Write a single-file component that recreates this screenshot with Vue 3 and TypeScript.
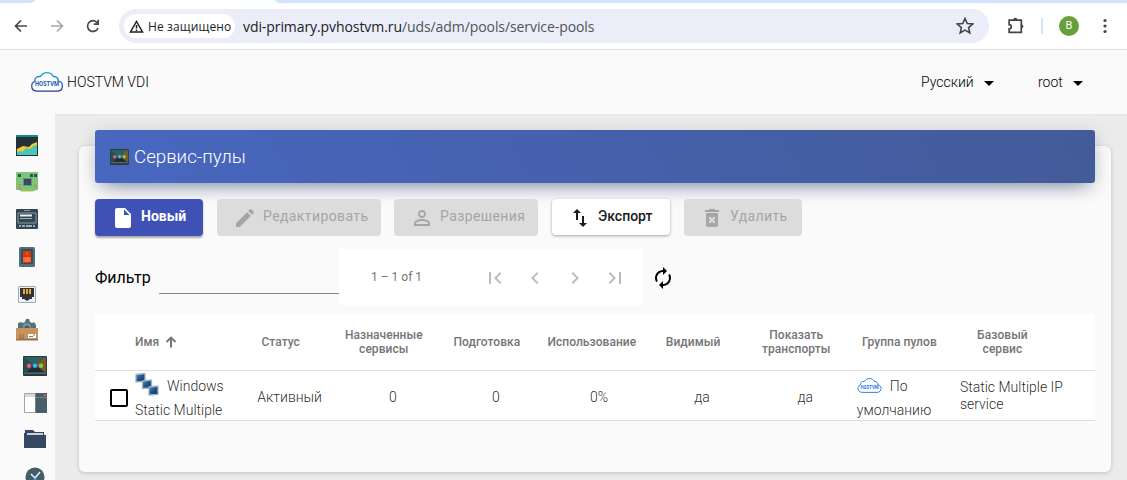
<script setup lang="ts">
interface ToolButton {
  key: string
  label: string
  kind: 'primary' | 'disabled' | 'plain'
  icon: string
}

interface Column {
  key: string
  lines: string[]
  sorted?: boolean
}

const buttons: ToolButton[] = [
  { key: 'new', label: 'Новый', kind: 'primary', icon: 'M6 2c-1.1 0-2 .9-2 2v16c0 1.1.9 2 2 2h12c1.1 0 2-.9 2-2V8l-6-6H6zm7 7V3.5L18.5 9H13z' },
  { key: 'edit', label: 'Редактировать', kind: 'disabled', icon: 'M3 17.25V21h3.75L17.81 9.94l-3.75-3.75L3 17.25zM20.71 7.04a1 1 0 0 0 0-1.41l-2.34-2.34a1 1 0 0 0-1.41 0l-1.83 1.83 3.75 3.75 1.83-1.83z' },
  { key: 'perm', label: 'Разрешения', kind: 'disabled', icon: 'M12 5.9a2.1 2.1 0 1 1 0 4.2 2.1 2.1 0 0 1 0-4.2m0 9c2.97 0 6.1 1.46 6.1 2.1v1.1H5.9V17c0-.64 3.13-2.1 6.1-2.1M12 4C9.790 4 8 5.790 8 8s1.790 4 4 4 4-1.790 4-4-1.790-4-4-4zm0 9c-2.670 0-8 1.340-8 4v3h16v-3c0-2.660-5.330-4-8-4z' },
  { key: 'export', label: 'Экспорт', kind: 'plain', icon: 'M16 17.010V10h-2v7.010h-3L15 21l4-3.990h-3zM9 3L5 6.990h3V14h2V6.990h3L9 3z' },
  { key: 'delete', label: 'Удалить', kind: 'disabled', icon: 'M6 19c0 1.100.900 2 2 2h8c1.100 0 2-.900 2-2V7H6v12zm2.460-7.120l1.410-1.410L12 12.590l2.120-2.120 1.410 1.410L13.410 14l2.120 2.120-1.410 1.410L12 15.410l-2.120 2.120-1.410-1.410L10.590 14l-2.130-2.120zM15.500 4l-1-1h-5l-1 1H5v2h14V4z' },
]

const pagerIcons: string[] = [
  'M18.410 16.590L13.820 12l4.590-4.590L17 6l-6 6 6 6zM6 6h2v12H6z',
  'M15.410 7.410L14 6l-6 6 6 6 1.410-1.410L10.830 12z',
  'M10 6L8.590 7.410 13.170 12l-4.580 4.590L10 18l6-6z',
  'M5.590 7.410L10.180 12l-4.590 4.590L7 18l6-6-6-6zM16 6h2v12h-2z',
]

const columns: Column[] = [
  { key: 'name', lines: ['Имя'], sorted: true },
  { key: 'state', lines: ['Статус'] },
  { key: 'assigned', lines: ['Назначенные', 'сервисы'] },
  { key: 'preparing', lines: ['Подготовка'] },
  { key: 'usage', lines: ['Использование'] },
  { key: 'visible', lines: ['Видимый'] },
  { key: 'transports', lines: ['Показать', 'транспорты'] },
  { key: 'group', lines: ['Группа пулов'] },
  { key: 'parent', lines: ['Базовый', 'сервис'] },
]

const plainCells: string[] = ['Активный', '0', '0', '0%', 'да', 'да']
const url = { host: 'vdi-primary.pvhostvm.ru', path: '/uds/adm/pools/service-pools' }
</script>

<template>
  <div class="page">
    <svg class="defs" width="0" height="0" aria-hidden="true">
      <defs>
        <linearGradient id="cloudStroke" x1="0" y1="0" x2="0" y2="1">
          <stop offset="0" stop-color="#20a8e0" />
          <stop offset="1" stop-color="#263c92" />
        </linearGradient>
        <linearGradient id="screen" x1="0" y1="0" x2="1" y2="1">
          <stop offset="0" stop-color="#4d94cc" />
          <stop offset="0.5" stop-color="#1e5488" />
          <stop offset="1" stop-color="#123b66" />
        </linearGradient>
        <symbol id="pool" viewBox="0 0 24 20">
          <rect width="24" height="20" rx="1" fill="#263940" />
          <path d="M1 1h22v15H1z" fill="#2b6260" />
          <path d="M1 1v15l10-6z" fill="#23504f" />
          <path d="M23 1v15l-11-7z" fill="#80591d" />
          <path d="M3 16l9-7 9 7z" fill="#252b2d" />
          <path d="M1 16.500h22v1.500H1z" fill="#59666b" />
          <circle cx="6" cy="9.700" r="2.200" fill="#f75186" />
          <circle cx="12" cy="9.700" r="2.200" fill="#35baf5" />
          <circle cx="18" cy="9.700" r="2.200" fill="#7bc86c" />
        </symbol>
        <symbol id="cloud" viewBox="0 0 32 20">
          <path d="M7 19.200C3 19.200.7 17 .7 14c0-2.500 1.200-4 3-4.600C3.500 6.200 6 4 9.300 4.600 11 1.800 13.200.7 16 .7c3 0 5 1.300 6.200 3.800 3.200-.2 5.400 1.700 5.100 4.700 2.700.5 4.100 2.200 4.100 4.800 0 3.100-2.200 5.200-5.400 5.200z" fill="#fff" />
        </symbol>
      </defs>
    </svg>

    <header class="browser">
      <div class="tabs"><i class="tab-left"></i><i class="tab-active"></i><i class="tab-rest"></i></div>
      <div class="toolbar">
        <svg class="nav back" viewBox="0 0 16 16"><path d="M14 8H3M8 2.500L2.500 8 8 13.500" /></svg>
        <svg class="nav forward" viewBox="0 0 16 16"><path d="M2 8h11M8 2.500L13.500 8 8 13.500" /></svg>
        <svg class="nav reload" viewBox="0 0 16 16"><path d="M13 10a5.400 5.400 0 1 1-.8-5.300M13.200 1.800v4.400H8.800" /></svg>
        <div class="address">
          <div class="insecure">
            <svg width="15" height="13" viewBox="0 0 15 13"><path d="M7.500 1.500L13.500 12h-12z" fill="none" stroke="#202124" stroke-width="1.500" /><path d="M7.500 5v3.500M7.500 9.500v1.500" stroke="#202124" stroke-width="1.500" /></svg>
            <span>Не защищено</span>
          </div>
          <div class="url">{{ url.host }}<span>{{ url.path }}</span></div>
          <svg class="star" viewBox="0 0 16 16"><path d="M8 1.300l2 4.500 4.900.4-3.700 3.200 1.100 4.800L8 11.700l-4.300 2.500 1.100-4.800L1.100 6.200 6 5.800z" /></svg>
        </div>
        <svg class="puzzle" viewBox="0 0 17 17"><path d="M2 3h11.500v11.500H2v-3.300c1.300 0 2-.8 2-2s-.7-2-2-2z" /><path d="M5.800 2.800a2 2 0 0 1 4 0zM13.500 6.800a2 2 0 0 1 0 4z" class="solid" /></svg>
        <i class="divider"></i>
        <span class="avatar">B</span>
        <svg class="dots" viewBox="0 0 4 16"><circle cx="2" cy="2.500" r="1.600" /><circle cx="2" cy="8" r="1.600" /><circle cx="2" cy="13.500" r="1.600" /></svg>
      </div>
    </header>

    <nav class="topbar">
      <svg class="brand-logo" viewBox="0 0 32 20">
        <path d="M7 19.200C3 19.200.7 17 .7 14c0-2.500 1.200-4 3-4.600C3.500 6.200 6 4 9.300 4.600 11 1.800 13.200.7 16 .7c3 0 5 1.300 6.200 3.800 3.200-.2 5.400 1.700 5.100 4.700 2.700.5 4.100 2.200 4.100 4.800 0 3.100-2.200 5.200-5.400 5.200z" fill="#fff" stroke="url(#cloudStroke)" stroke-width="1.300" />
        <text x="16" y="14" text-anchor="middle" textLength="24" lengthAdjust="spacingAndGlyphs" class="logo-text">HOSTVM</text>
      </svg>
      <span class="brand">HOSTVM VDI</span>
      <span class="menu lang">Русский<i></i></span>
      <span class="menu user">root<i></i></span>
    </nav>

    <div class="body">
      <aside class="sidebar">
        <div><svg width="22" height="21" viewBox="0 0 22 21"><path d="M0 0h22v21H0z" fill="#26323a" /><path d="M0 0h22v2H0z" fill="#168b82" /><path d="M1 19v-5l6-3 6 1 3-3 5-2v5z" fill="#f5cb32" /><path d="M1 20v-3l3-1 2 1 4-4 4 1 3-3 4-1v10z" fill="#49c7b9" /></svg></div>
        <div><svg width="22" height="20" viewBox="0 0 22 20"><path d="M0 0h22v18h-3v1H4v-1H0z" fill="#7dc578" /><path d="M5 19h12v1H5z" fill="#f5d66a" /><path d="M7 6h9v8H7z" fill="#718d82" /><path d="M8 7h7v6H8zM2 2h3v3H2zM14 2h3v3h-3zM18 2h3v3h-3z" fill="#354b5e" /><path d="M2 12.500h3M2 15h3M2 17h3M18 13h3M18 15h3" stroke="#d8766a" /></svg></div>
        <div><svg width="22" height="20" viewBox="0 0 22 20"><rect width="22" height="20" rx="1" fill="#304650" /><path d="M8 1.500h6" stroke="#89979d" /><path d="M2 4h18v10H2z" fill="none" stroke="#8c9da5" /><path d="M4 6.500h12" stroke="#eceff1" stroke-width="2" /><path d="M4 9.500h12" stroke="#9badb5" /><path d="M3 17h2m1 0h3m1 0h6m1 0h2" stroke="#c0cbd0" stroke-width="1.500" /></svg></div>
        <div><svg width="16" height="20" viewBox="0 0 16 20"><rect width="16" height="20" rx="1.500" fill="#52707c" /><path d="M2 2h12v15H2z" fill="#354e59" /><path d="M4 4h8v12H4z" fill="#dc3508" /><path d="M4 10h8v5H4z" fill="#ff5d2b" /><path d="M8 5v3" stroke="#ff6d38" /><circle cx="8" cy="12.500" r="1.500" fill="none" stroke="#ff9169" /></svg></div>
        <div><svg width="18" height="18" viewBox="0 0 18 18"><rect x=".5" y=".5" width="17" height="16" rx=".5" fill="#eef2f4" stroke="#9bacb4" /><path d="M2 2h14v9h-2v2h-2l-3 2-3-2H4v-2H2z" fill="#323335" /><path d="M6 3v5M9 3v5M12 3v5" stroke="#efa33c" stroke-width="2" /></svg></div>
        <div><svg width="22" height="22" viewBox="0 0 22 22"><path d="M2 11V4l3-1 2 1 2-1 1-3h3l1 3 2 1 2-1 2 3v5z" fill="#52727d" /><circle cx="11" cy="8" r="4" fill="#7b919a" /><circle cx="11" cy="9" r="2.500" fill="#455e68" /><path d="M0 9h22v12H0z" fill="#c8925c" /><path d="M0 20h22v1.500H0z" fill="#97714e" /><path d="M12 15h8v4h-8z" fill="#fff" /><path d="M13 17.500h4M17 16h2" stroke="#6c7b80" /><path d="M4 15v4M7 15v4M3 19h5" stroke="#946b43" /></svg></div>
        <div class="nested"><svg width="24" height="20"><use href="#pool" /></svg></div>
        <div class="nested"><svg width="23" height="21" viewBox="0 0 23 21"><path d="M.5.5h11v19H.500z" fill="#fff" stroke="#9ba8ad" /><path d="M1 1h10v3H1z" fill="#d5d9db" /><path d="M11.500 0H23v20H11.500z" fill="#485f69" /><path d="M12 4.500h11" stroke="#71858e" /><circle cx="21" cy="2.300" r="1.200" fill="#ef5350" /></svg></div>
        <div class="nested"><svg width="22" height="18" viewBox="0 0 22 18"><path d="M1 3V0h8l2 2h9v3h2v13H0V3z" fill="#344961" /><path d="M3 4h16" stroke="#fff" stroke-width="1.500" /></svg></div>
        <div class="nested"><svg width="20" height="20" viewBox="0 0 20 20"><circle cx="10" cy="10" r="9.500" fill="#435c67" /><path d="M6 7l4 4 5-6" fill="none" stroke="#e5eaec" stroke-width="1.600" /><circle cx="10" cy="12.500" r="1.500" fill="#4b92e8" /></svg></div>
      </aside>

      <main class="content">
        <section class="card">
          <h1 class="heading"><svg width="19" height="16"><use href="#pool" /></svg>Сервис-пулы</h1>

          <div class="actions">
            <button v-for="b in buttons" :key="b.key" :class="['btn', b.kind, b.key]">
              <svg viewBox="0 0 24 24"><path :d="b.icon" fill-rule="evenodd" /></svg>{{ b.label }}
            </button>
          </div>

          <div class="navigation">
            <label class="filter">Фильтр<i></i></label>
            <div class="paginator">
              <span>1 – 1 of 1</span>
              <svg v-for="(d, n) in pagerIcons" :key="n" viewBox="0 0 24 24"><path :d="d" /></svg>
            </div>
            <svg class="refresh" viewBox="0 0 24 24"><path d="M12 6v3l4-4-4-4v3c-4.420 0-8 3.580-8 8 0 1.570.460 3.030 1.240 4.260L6.700 14.800A5.900 5.900 0 0 1 6 12c0-3.310 2.690-6 6-6zm6.760 1.740L17.300 9.200c.440.840.700 1.790.700 2.800 0 3.310-2.690 6-6 6v-3l-4 4 4 4v-3c4.420 0 8-3.580 8-8 0-1.570-.460-3.030-1.240-4.260z" /></svg>
          </div>

          <div class="table">
            <div class="row head">
              <div class="check"></div>
              <div v-for="c in columns" :key="c.key" :class="['cell', { sorted: c.sorted }]">
                <div><div v-for="line in c.lines" :key="line">{{ line }}</div></div>
                <span class="arrow"><svg v-if="c.sorted" width="12" height="12" viewBox="0 0 12 12"><path d="M6 11.500V2M1.500 6L6 1.600 10.500 6" /></svg></span>
              </div>
            </div>
            <div class="row data">
              <div class="check"><i></i></div>
              <div class="cell name">
                <div class="line">
                  <svg width="24" height="24" viewBox="0 0 24 24">
                    <g stroke="#a3b4bf" stroke-width="1.300" fill="url(#screen)">
                      <path d="M1 1.500l9-1v8l-9 .5z" /><path d="M7.500 8l9-1v8l-9 .5z" /><path d="M14 14l9-1v8.500l-9 .5z" />
                    </g>
                  </svg><span>Windows</span>
                </div>
                <div class="line">Static Multiple</div>
              </div>
              <div v-for="(v, n) in plainCells" :key="n" class="cell center">{{ v }}</div>
              <div class="cell name group">
                <div class="line">
                  <svg width="25" height="15" viewBox="0 0 32 20">
                    <path d="M7 19.200C3 19.200.7 17 .7 14c0-2.500 1.200-4 3-4.600C3.500 6.200 6 4 9.300 4.600 11 1.800 13.200.7 16 .7c3 0 5 1.300 6.200 3.800 3.200-.2 5.400 1.700 5.100 4.700 2.700.5 4.100 2.200 4.100 4.800 0 3.100-2.200 5.200-5.400 5.200z" fill="#fff" stroke="#287fe4" stroke-width="1.300" />
                    <text x="16" y="14" text-anchor="middle" textLength="24" lengthAdjust="spacingAndGlyphs" class="logo-text bright">HOSTVM</text>
                  </svg><span>По</span>
                </div>
                <div class="line">умолчанию</div>
              </div>
              <div class="cell parent">Static Multiple IP<br />service</div>
            </div>
          </div>
        </section>
      </main>
    </div>
  </div>
</template>

<style>
html, body { overflow: hidden; }
</style>

<style scoped>
* { box-sizing: border-box; }
.page { width: 1127px; height: 480px; overflow: hidden; background: #fafafa; font-family: Roboto, "Noto Sans", sans-serif; color: #000; display: flex; flex-direction: column; }
.defs { display: block; flex: none; height: 0; }
svg { flex: none; display: block; }

.browser { height: 50px; background: #fff; border-bottom: 1px solid #dedfe1; flex: none; font-family: "Open Sans", "Noto Sans", sans-serif; }
.tabs { height: 3px; display: flex; background: #fff; }
.tab-left { width: 35px; background: #d3e3fd; border-bottom-right-radius: 5px 3px; }
.tab-active { width: 240px; background: #fff; }
.tab-rest { flex: 1; background: #d3e3fd; border-bottom-left-radius: 5px 3px; }
.toolbar { height: 46px; display: flex; align-items: center; }
.nav { width: 16px; height: 16px; fill: none; stroke: #45484b; stroke-width: 1.7; }
.back { margin-left: 13px; }
.forward { margin-left: 20px; stroke: #a5a6a7; }
.reload { margin-left: 20px; }
.address { width: 870px; height: 34px; margin-left: 18px; border-radius: 17px; background: #ebeef8; display: flex; align-items: center; padding-left: 5px; }
.insecure { width: 111px; height: 24px; border-radius: 12px; background: #fff; display: flex; align-items: center; padding-left: 5px; font-size: 12px; letter-spacing: .13px; color: #202124; white-space: nowrap; }
.insecure span { margin-left: 4px; }
.url { margin-left: 8px; flex: 1; font-size: 14px; letter-spacing: -.08px; color: #202124; white-space: nowrap; }
.url span { color: #505357; }
.star { width: 18px; height: 18px; margin-right: 15px; fill: none; stroke: #414447; stroke-width: 1.4; }
.puzzle { width: 18px; height: 18px; margin-left: 18px; fill: none; stroke: #414447; stroke-width: 1.6; }
.puzzle .solid { fill: #414447; stroke: none; }
.divider { width: 2px; height: 16px; margin-left: 16px; background: #d3e3fd; }
.avatar { width: 20px; height: 20px; margin-left: 16px; border-radius: 50%; background: #689f38; color: #fff; text-align: center; font: 11px/20px Roboto, sans-serif; }
.dots { width: 4px; height: 16px; margin-left: 24px; fill: #45484b; }

.topbar { height: 64px; flex: none; display: flex; align-items: center; font-size: 14px; font-weight: 300; background: #fafafa; }
.brand-logo { width: 32px; height: 20px; margin-left: 31px; }
.logo-text { font: 700 6.5px Roboto, sans-serif; fill: #2458a6; }
.logo-text.bright { fill: #1976dc; }
.brand { margin-left: 4px; width: 84px; white-space: nowrap; }
.menu { display: flex; align-items: center; }
.menu i { border: 5px solid transparent; border-top-color: #000; border-bottom: 0; margin-top: 3px; }
.lang { margin-left: 770px; width: 73px; justify-content: space-between; }
.user { margin-left: 44px; width: 45px; justify-content: space-between; }

.body { flex: 1; min-height: 0; display: flex; }
.sidebar { width: 55px; padding-top: 13px; display: grid; grid-template-rows: 36px 37px 38px 38px 37px 34px 38px 36px 36px 40px; background: #fafafa; }
.sidebar div { width: 54px; display: flex; align-items: center; justify-content: center; }
.sidebar .nested { padding-left: 16px; }
.content { flex: 1; padding: 32px 16px 0 24px; background: #ebebeb; box-shadow: inset 0 1px #e6e6e6; }
.card { height: 326px; padding: 0 16px; border-radius: 6px; background: #fafafa; box-shadow: 0 1px 4px rgba(0, 0, 0, .18); }
.heading { height: 53px; margin: -16px 0 0; padding-left: 15px; display: flex; align-items: center; font-size: 18.7px; font-weight: 300; color: #fff; background: linear-gradient(60deg, #4867c0, #435b98); border-radius: 3px; box-shadow: 0 10px 20px -10px rgba(52, 73, 132, .65), 0 4px 18px rgba(0, 0, 0, .14); position: relative; top: -16px; margin: 0 0 -16px; }
.heading svg { margin-right: 5px; }
.actions { margin-top: 16px; display: flex; }
.btn { height: 37px; padding: 0 0 0 16px; margin-right: 14px; border: 0; border-radius: 4px; display: flex; align-items: center; font: 500 14px Roboto, sans-serif; white-space: nowrap; position: relative; }
.btn svg { width: 24px; height: 24px; margin: 2px 6px 0 0; fill: currentColor; }
.btn { line-height: 34px; align-items: flex-start; }
.btn svg { margin-top: 7px; }
.primary { width: 108px; background: #3f51b5; color: #fff; font-weight: 700; box-shadow: 0 2px 2px rgba(0, 0, 0, .32); }
.disabled { background: #dcdcdc; color: #a5a5a5; font-weight: 400; letter-spacing: .4px; }
.edit { width: 164px; margin-right: 13px; }
.perm { width: 144px; }
.plain { width: 118px; height: 36px; color: #1c1c1c; background: #fff; box-shadow: 0 1px 3px rgba(0, 0, 0, .35); }
.delete { width: 118px; }

.navigation { height: 56px; margin-top: 13px; display: flex; align-items: center; }
.filter { width: 244px; display: flex; align-items: center; font-size: 16px; }
.filter i { width: 180px; margin-left: auto; height: 34px; border-bottom: 1px solid #858585; }
.paginator { width: 304px; height: 56px; background: #fff; display: flex; align-items: center; padding-left: 32px; font-size: 12px; color: #757575; }
.paginator span { width: 112px; }
.paginator svg { width: 24px; height: 24px; margin-right: 16px; fill: #bdbdbd; margin-top: 2px; transform: none; }
.refresh { width: 24px; height: 24px; margin-left: 8px; margin-top: 2px; }
.table { margin-top: 9px; background: #fff; }
.row { display: grid; grid-template-columns: 40px repeat(9, 103.11px); border-bottom: 1px solid #dedede; }
.head { height: 57px; font-size: 12px; font-weight: 500; color: #757575; letter-spacing: .05px; }
.head .cell { display: flex; align-items: center; justify-content: center; text-align: center; line-height: 14px; }
.head .sorted { justify-content: flex-start; }
.arrow { width: 18px; padding-left: 6px; }
.arrow path { fill: none; stroke: #757575; stroke-width: 2; }
.data { height: 50px; font-size: 14px; font-weight: 300; color: rgba(0, 0, 0, .87); }
.check { display: flex; align-items: center; padding-left: 15px; }
.check i { width: 18px; height: 18px; border: 2px solid #000; border-radius: 2px; margin-top: 2px; }
.data .cell { min-width: 0; white-space: nowrap; }
.center { display: flex; align-items: center; justify-content: center; }
.name .line { height: 25px; display: flex; align-items: center; line-height: 25px; }
.name .line:first-child { height: 28px; margin-bottom: -1px; align-items: center; }
.name .line:first-child span { margin-left: 8px; margin-top: 2px; }
.name .line:last-child { padding-bottom: 0; }
.parent { padding-top: 8px; line-height: 17px; }
</style>
